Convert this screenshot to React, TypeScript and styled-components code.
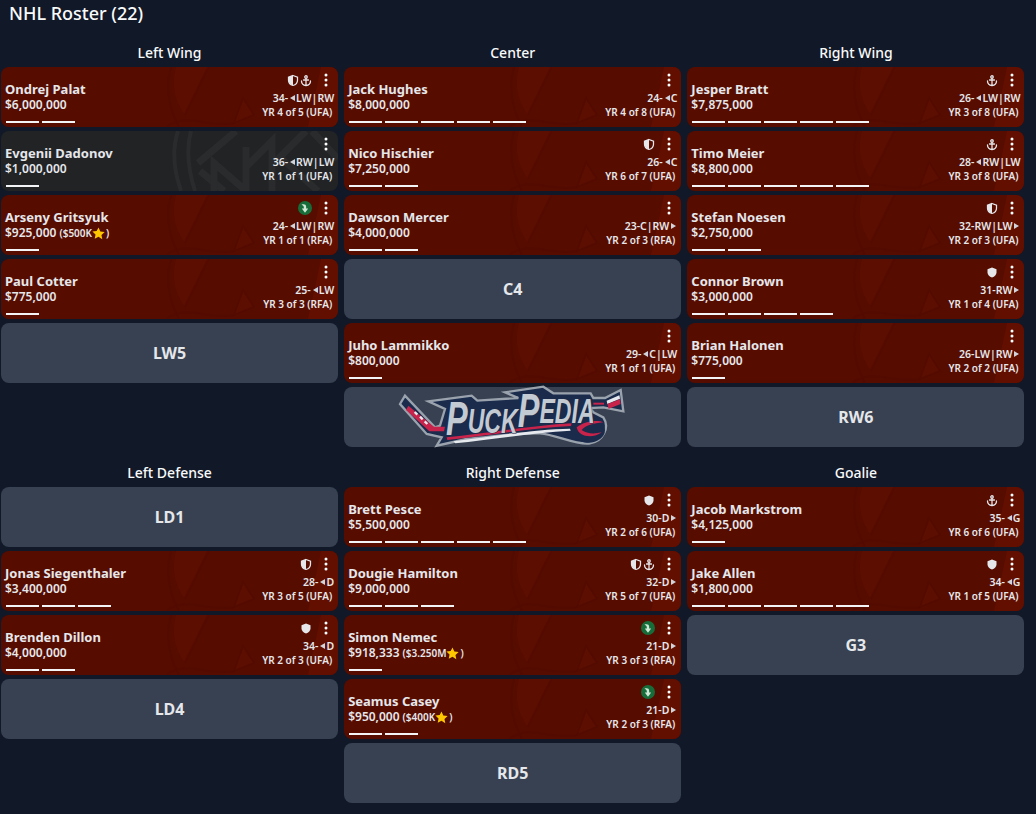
import React from "react";
import styled, { createGlobalStyle } from "styled-components";

const Global = createGlobalStyle`
  html, body { margin: 0; padding: 0; background: #111827; }
  body { font-family: "Noto Sans", "Open Sans", sans-serif; color: #f3f4f6; }
`;

const Page = styled.div`
  width: 1023.5px;
  height: 814px;
  margin-left: 1px;
  overflow: hidden;
`;
const Title = styled.h1`
  margin: 0;
  padding: 0 0 0 8px;
  height: 42px;
  box-sizing: border-box;
  font-size: 18px;
  line-height: 26px;
  font-weight: 500;
  color: #f9fafb;
`;
const Grid = styled.div`
  display: grid;
  grid-template-columns: repeat(3, 1fr);
  column-gap: 6px;
  row-gap: 15px;
`;
const Column = styled.section`
  display: flex;
  flex-direction: column;
  gap: 4px;
  min-width: 0;
`;
const Heading = styled.h2`
  margin: 0;
  height: 21px;
  font-size: 14px;
  line-height: 22px;
  font-weight: 500;
  text-align: center;
  color: #f9fafb;
`;
const Card = styled.article<{ $dark?: boolean }>`
  position: relative;
  height: 60px;
  border-radius: 8px;
  overflow: hidden;
  display: flex;
  justify-content: space-between;
  padding: 0 4px;
  box-sizing: border-box;
  background: ${(p) => (p.$dark ? "#222325" : "#570c00")};
`;
const Empty = styled.div`
  height: 60px;
  border-radius: 8px;
  background: #374151;
  display: flex;
  align-items: center;
  justify-content: center;
  font-size: 16px;
  font-weight: 700;
  color: #e5e7eb;
`;
const Watermark = styled.svg`
  position: absolute;
  right: 0;
  top: 0;
  width: 172px;
  height: 60px;
`;
const Left = styled.div`
  position: relative;
  display: flex;
  flex-direction: column;
  padding-top: 14px;
  min-width: 0;
`;
const Name = styled.div`
  font-size: 13px;
  line-height: 16px;
  font-weight: 700;
  color: #e5e7eb;
`;
const Salary = styled.div`
  font-size: 12px;
  line-height: 16px;
  font-weight: 600;
  color: #e5e7eb;
  display: flex;
  align-items: center;
  white-space: nowrap;
`;
const Bonus = styled.span`
  font-size: 10px;
  font-weight: 600;
  margin-left: 3px;
  display: inline-flex;
  align-items: center;
`;
const Bars = styled.div`
  display: flex;
  gap: 3px;
  margin-top: 8px;
  margin-left: 1px;
`;
const Bar = styled.i`
  display: block;
  width: 33px;
  height: 2px;
  background: #f3f4f6;
`;
const Right = styled.div`
  position: relative;
  display: flex;
  flex-direction: column;
  align-items: flex-end;
  padding-top: 4px;
`;
const IconRow = styled.div`
  height: 18px;
  display: flex;
  align-items: center;
  gap: 1px;
  margin-bottom: 2px;
`;
const Kebab = styled.svg`
  width: 4px;
  height: 14px;
  margin: 0 6.500px 0 11px;
  color: #fff;
`;
const Meta = styled.div`
  font-size: 10.500px;
  line-height: 14px;
  font-weight: 600;
  color: #e5e7eb;
  display: flex;
  align-items: center;
  white-space: nowrap;
`;
const Contract = styled(Meta)`
  font-size: 10px;
  padding-right: 2px;
`;
const Arrow = styled.span<{ $dir: "l" | "r" }>`
  width: 0;
  height: 0;
  margin: 0 1px 0 2px;
  border-top: 3.500px solid transparent;
  border-bottom: 3.500px solid transparent;
  ${(p) => (p.$dir === "l" ? "border-right: 5px solid #d1d5db;" : "border-left: 5px solid #d1d5db;")}
`;
const Divider = styled.span`
  margin: 0;
  font-weight: 600;
`;
const LogoSlot = styled.div`
  height: 60px;
  border-radius: 8px;
  background: #374151;
  display: flex;
  align-items: center;
  justify-content: center;
`;
const LogoArt = styled.svg`
  width: 250px;
  height: 60px;
  margin-left: 5px;
  overflow: visible;
`;
const LogoWord = styled.text`
  font-family: "Liberation Sans", sans-serif;
  font-weight: 700;
  font-style: italic;
  fill: #c4cad2;
  stroke: #1a2b4c;
  stroke-width: 3px;
  paint-order: stroke;
`;

const Devil = () => (
  <Watermark viewBox="0 0 172 60" preserveAspectRatio="none" aria-hidden>
    <path d="M10 0C5 18 9 34 18 47L41 0Z" fill="#5c0e00" />
    <path d="M5 0C-1 20 3 42 13 60" fill="none" stroke="#530b00" strokeWidth="2" />
    <path d="M43 0L19 48" fill="none" stroke="#530b00" strokeWidth="1.500" />
    <path d="M0 60C8 54 18 52 30 54C46 57 58 58 68 56" fill="none" stroke="#530b00" strokeWidth="2" />
    <path d="M77 31L88 48L68 56Z" fill="#5c0e00" stroke="#530b00" strokeWidth="1.500" />
    <path d="M155 0L142 60H172V0Z" fill="#620f00" />
  </Watermark>
);

const NhlMark = () => (
  <Watermark viewBox="0 0 172 60" preserveAspectRatio="none" aria-hidden>
    <g fill="none" stroke="#2a2b2d" strokeWidth="7">
      <path d="M12 0C6 18 8 40 15 60M25 0C20 18 22 38 29 60" strokeWidth="4" />
      <path d="M32 32L70 0M34 40L58 60" />
      <path d="M48 60V32L80 60V16M80 36L106 10V60M106 34L140 0M116 28L152 60M146 0L172 28" />
    </g>
  </Watermark>
);

const HalfShield = () => (
  <svg width="12" height="13" viewBox="0 0 24 24" aria-hidden>
    <path d="M12 2l9 3.400v6.300c0 5.400-3.700 9-9 10.300-5.300-1.300-9-4.900-9-10.300V5.400z" fill="none" stroke="#e5e7eb" strokeWidth="2.500" />
    <path d="M12 2l-9 3.400v6.300c0 5.400 3.700 9 9 10.300z" fill="#e5e7eb" />
  </svg>
);
const FullShield = () => (
  <svg width="12" height="13" viewBox="0 0 24 24" aria-hidden>
    <path d="M12 2l9 3.400v6.300c0 5.400-3.700 9-9 10.300-5.300-1.300-9-4.900-9-10.300V5.400z" fill="#e5e7eb" />
  </svg>
);
const AnchorIcon = () => (
  <svg width="12" height="13" viewBox="0 0 24 24" fill="none" stroke="#e5e7eb" strokeWidth="2.600" strokeLinecap="round" aria-hidden>
    <circle cx="12" cy="5" r="2.500" />
    <path d="M12 8v14M7 11h10M3 13c0 5 4 8.500 9 9 5-.5 9-4 9-9" />
  </svg>
);
const DropSvg = styled.svg`
  width: 14px;
  height: 14px;
  margin-right: 0;
`;
const Drop = () => (
  <DropSvg viewBox="0 0 24 24" aria-hidden>
    <circle cx="12" cy="12" r="12" fill="#176d39" />
    <path d="M6 6c5-1 8 0 8 4v3h3.500L12 20l-5.500-7H10v-2c0-2-1.500-3.500-4-5z" fill="#d1e7d6" />
  </DropSvg>
);
const StarSvg = styled.svg`
  width: 13px;
  height: 13px;
  margin: 0 1px 0 0;
`;
const Star = () => (
  <StarSvg viewBox="0 0 24 24" aria-hidden>
    <path d="M12 1l3.400 7.300 7.900 1-5.800 5.500 1.500 7.900L12 17.900 5 21.700l1.500-7.900L.7 8.300l7.900-1z" fill="#fdc700" />
  </StarSvg>
);

type Player = {
  name: string;
  salary: string;
  age: number;
  pos: string[];
  hand: "l" | "r";
  yr: string;
  bars: number;
  icons?: string;
  bonus?: string;
  dark?: boolean;
};

const P = (name: string, salary: string, age: number, pos: string, hand: "l" | "r", yr: string, bars: number, icons = "", bonus?: string, dark?: boolean): Player => ({
  name, salary, age, pos: pos.split("|"), hand, yr, bars, icons, bonus, dark,
});

const top = [
  { title: "Left Wing", items: [
    P("Ondrej Palat", "$6,000,000", 34, "LW|RW", "l", "YR 4 of 5 (UFA)", 2, "ha"),
    P("Evgenii Dadonov", "$1,000,000", 36, "RW|LW", "l", "YR 1 of 1 (UFA)", 1, "", undefined, true),
    P("Arseny Gritsyuk", "$925,000", 24, "LW|RW", "l", "YR 1 of 1 (RFA)", 1, "d", "$500K"),
    P("Paul Cotter", "$775,000", 25, "LW", "l", "YR 3 of 3 (RFA)", 1),
    "LW5",
  ]},
  { title: "Center", items: [
    P("Jack Hughes", "$8,000,000", 24, "C", "l", "YR 4 of 8 (UFA)", 5),
    P("Nico Hischier", "$7,250,000", 26, "C", "l", "YR 6 of 7 (UFA)", 2, "h"),
    P("Dawson Mercer", "$4,000,000", 23, "C|RW", "r", "YR 2 of 3 (RFA)", 2),
    "C4",
    P("Juho Lammikko", "$800,000", 29, "C|LW", "l", "YR 1 of 1 (UFA)", 1),
    "LOGO",
  ]},
  { title: "Right Wing", items: [
    P("Jesper Bratt", "$7,875,000", 26, "LW|RW", "l", "YR 3 of 8 (UFA)", 5, "a"),
    P("Timo Meier", "$8,800,000", 28, "RW|LW", "l", "YR 3 of 8 (UFA)", 5, "a"),
    P("Stefan Noesen", "$2,750,000", 32, "RW|LW", "r", "YR 2 of 3 (UFA)", 2, "h"),
    P("Connor Brown", "$3,000,000", 31, "RW", "r", "YR 1 of 4 (UFA)", 4, "f"),
    P("Brian Halonen", "$775,000", 26, "LW|RW", "r", "YR 2 of 2 (UFA)", 1),
    "RW6",
  ]},
];
const bottom = [
  { title: "Left Defense", items: [
    "LD1",
    P("Jonas Siegenthaler", "$3,400,000", 28, "D", "l", "YR 3 of 5 (UFA)", 3, "h"),
    P("Brenden Dillon", "$4,000,000", 34, "D", "l", "YR 2 of 3 (UFA)", 2, "f"),
    "LD4",
  ]},
  { title: "Right Defense", items: [
    P("Brett Pesce", "$5,500,000", 30, "D", "r", "YR 2 of 6 (UFA)", 5, "f"),
    P("Dougie Hamilton", "$9,000,000", 32, "D", "r", "YR 5 of 7 (UFA)", 3, "ha"),
    P("Simon Nemec", "$918,333", 21, "D", "r", "YR 3 of 3 (RFA)", 1, "d", "$3.250M"),
    P("Seamus Casey", "$950,000", 21, "D", "r", "YR 2 of 3 (RFA)", 2, "d", "$400K"),
    "RD5",
  ]},
  { title: "Goalie", items: [
    P("Jacob Markstrom", "$4,125,000", 35, "G", "l", "YR 6 of 6 (UFA)", 1, "a"),
    P("Jake Allen", "$1,800,000", 34, "G", "l", "YR 1 of 5 (UFA)", 5, "f"),
    "G3",
  ]},
];

const iconFor = (c: string, i: number) =>
  c === "h" ? <HalfShield key={i} /> : c === "a" ? <AnchorIcon key={i} /> : c === "f" ? <FullShield key={i} /> : <Drop key={i} />;

const PlayerCard = ({ p }: { p: Player }) => (
  <Card $dark={p.dark}>
    {p.dark ? <NhlMark /> : <Devil />}
    <Left>
      <Name>{p.name}</Name>
      <Salary>
        {p.salary}
        {p.bonus && (
          <Bonus>
            ({p.bonus}
            <Star />)
          </Bonus>
        )}
      </Salary>
      <Bars>
        {Array.from({ length: p.bars }, (_, i) => (
          <Bar key={i} />
        ))}
      </Bars>
    </Left>
    <Right>
      <IconRow>
        {(p.icons || "").split("").map(iconFor)}
        <Kebab viewBox="0 0 4 14" aria-hidden>
          <circle cx="2" cy="2" r="1.500" fill="currentColor" />
          <circle cx="2" cy="7" r="1.500" fill="currentColor" />
          <circle cx="2" cy="12" r="1.500" fill="currentColor" />
        </Kebab>
      </IconRow>
      <Meta>
        {p.age}-{p.hand === "l" && <Arrow $dir="l" />}
        {p.pos.map((x, i) => (
          <React.Fragment key={x}>
            {i > 0 && <Divider>|</Divider>}
            {x}
          </React.Fragment>
        ))}
        {p.hand === "r" && <Arrow $dir="r" />}
      </Meta>
      <Contract>{p.yr}</Contract>
    </Right>
  </Card>
);

const Logo = () => (
  <LogoArt viewBox="0 9 750 180" aria-label="PuckPedia logo">
    <path d="M45 35L30 60L110 150L155 160L140 185L230 165C300 160 380 145 450 148C500 152 560 185 600 178C640 172 660 130 640 100L610 85L600 72L640 70L700 82L692 18L645 42L610 42L602 28L490 28L460 8L345 25L385 42L262 50L245 35L115 52L165 75L150 125L135 130Z" fill="#1a2b4c" stroke="#9aa3ad" strokeWidth="7" strokeLinejoin="miter" />
    <path d="M55 65L48 78L118 142H162L165 128H132Z" fill="#c8234a" />
    <path d="M74 84L82 92M90 98L98 106M104 112L112 120" stroke="#e6e9ee" strokeWidth="7" />
    <path d="M650 50L688 34L690 44L652 60Z" fill="#e6e9ee" />
    <path d="M610 56H642V62H610Z" fill="#c8234a" />
    <path d="M652 60L690 46L692 60L656 74Z" fill="#c8234a" />
    <ellipse cx="595" cy="138" rx="50" ry="38" fill="#1a2b4c" />
    <path d="M560 130C585 110 625 108 640 115C610 118 585 125 575 138C590 150 615 150 635 145C610 165 565 160 560 130Z" fill="#c8234a" />
    <path d="M170 160C280 150 420 125 545 118L543 126C420 132 290 156 172 168Z" fill="#c8234a" />
    <path d="M190 172C300 160 430 135 540 134L542 140C430 146 300 168 196 178Z" fill="#e6e9ee" />
    <LogoWord transform="translate(168 152) scale(.667 1)" fontSize="146">
      P
      <tspan fontSize="104" dy="-6">UCK</tspan>
      <tspan fontSize="146" dy="-18">P</tspan>
      <tspan fontSize="104" dy="-12">EDIA</tspan>
    </LogoWord>
  </LogoArt>
);

const Block = ({ col }: { col: { title: string; items: (Player | string)[] } }) => (
  <Column>
    <Heading>{col.title}</Heading>
    {col.items.map((it, i) =>
      typeof it !== "string" ? (
        <PlayerCard key={i} p={it} />
      ) : it === "LOGO" ? (
        <LogoSlot key={i}>
          <Logo />
        </LogoSlot>
      ) : (
        <Empty key={i}>{it}</Empty>
      )
    )}
  </Column>
);

export default function App() {
  return (
    <Page>
      <Global />
      <Title>NHL Roster (22)</Title>
      <Grid>
        {[...top, ...bottom].map((c) => (
          <Block key={c.title} col={c as any} />
        ))}
      </Grid>
    </Page>
  );
}
